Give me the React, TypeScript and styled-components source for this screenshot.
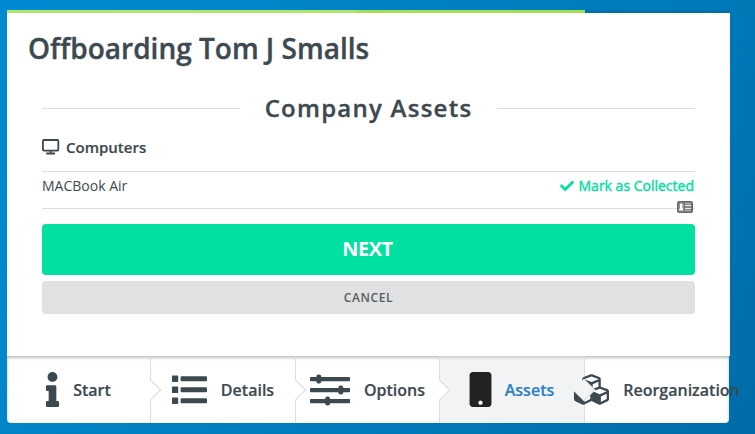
import React from "react";
import styled, { createGlobalStyle } from "styled-components";
import { FaCheck, FaCubes, FaInfo, FaMobile } from "react-icons/fa";

const ink = "#3d4950";
const rule = "#dcdddf";
const mint = "#00e0a0";

const GlobalStyle = createGlobalStyle`
  * { box-sizing: border-box; }
  html, body { margin: 0; height: 434px; overflow: hidden; }
  body { font-family: "Open Sans", "Noto Sans", sans-serif; color: ${ink}; }
`;

const Page = styled.main`
  height: 434px;
  padding: 10px 25px 0 7px;
  background: linear-gradient(125deg, #008ad1 0%, #0086ca 25%, #007abb 65%, #006ca7 100%);
`;

const Progress = styled.div`
  height: 3px;
  background: #0070ab;
`;

const ProgressFill = styled.div`
  width: 578px;
  height: 3px;
  background: linear-gradient(90deg, #b0e76b 0 349px, #a2df52 349px);
`;

const Panel = styled.section`
  height: 343px;
  padding: 17px 35px 0;
  background: #fff;
`;

const Title = styled.h1`
  margin: 0 0 0 -14px;
  font-size: 28px;
  font-weight: 600;
  line-height: 36px;
  white-space: nowrap;
  -webkit-text-stroke: 0.35px ${ink};
`;

const Divider = styled.h2`
  display: flex;
  align-items: center;
  gap: 25px;
  height: 36px;
  margin: 24px 0 0;
  font-size: 24px;
  font-weight: 600;
  line-height: 36px;
  letter-spacing: 1.25px;
  white-space: nowrap;
  -webkit-text-stroke: 0.35px ${ink};

  &::before,
  &::after {
    content: "";
    flex: 1;
    height: 1px;
    background: ${rule};
  }
`;

const GroupHeading = styled.h3`
  display: flex;
  align-items: center;
  gap: 6px;
  height: 46px;
  margin: 0;
  padding-bottom: 4px;
  border-bottom: 1px solid ${rule};
  font-size: 15px;
  font-weight: 600;
  -webkit-text-stroke: 0.2px ${ink};
`;

const AssetRow = styled.div`
  position: relative;
  display: flex;
  justify-content: space-between;
  height: 37px;
  padding-top: 4px;
  border-bottom: 1px solid ${rule};
  font-size: 14px;
  line-height: 20px;
`;

const Collect = styled.a`
  display: flex;
  align-items: center;
  gap: 5px;
  height: 20px;
  padding-right: 1px;
  color: ${mint};
  -webkit-text-stroke: 0.4px ${mint};
`;

const ContactBadge = styled.span`
  position: absolute;
  right: 2px;
  bottom: -5px;
  display: flex;
`;

const Button = styled.button<{ $primary?: boolean }>`
  display: block;
  width: 100%;
  height: ${(p) => (p.$primary ? 51 : 33)}px;
  margin-top: ${(p) => (p.$primary ? 15 : 6)}px;
  padding: ${(p) => (p.$primary ? "0 2px 2px 0" : "0")};
  border: 0;
  border-radius: 4px;
  background: ${(p) => (p.$primary ? mint : "#dfe1e2")};
  color: ${(p) => (p.$primary ? "#fff" : "#5b5c5d")};
  font-family: inherit;
  font-size: ${(p) => (p.$primary ? 20 : 12)}px;
  font-weight: ${(p) => (p.$primary ? 700 : 600)};
  letter-spacing: ${(p) => (p.$primary ? "-0.5px" : "0.6px")};
`;

const Steps = styled.nav`
  position: relative;
  display: grid;
  grid-template-columns: 144px 145px 144px 145px 144px;
  width: 722px;
  height: 67px;
  border-radius: 0 0 4px 4px;
  background: #fff;
  box-shadow: inset 0 2px 3px rgba(40, 50, 55, 0.3);
`;

const Step = styled.div<{ $active?: boolean; $tighten?: number }>`
  position: relative;
  display: flex;
  align-items: center;
  justify-content: center;
  gap: ${(p) => 14 - (p.$tighten ?? 0)}px;
  min-width: 0;
  padding-right: ${(p) => p.$tighten ?? 0}px;
  border-right: 1px solid #dcdddf;
  background: ${(p) => (p.$active ? "rgba(225, 228, 230, 0.45)" : "transparent")};
  color: ${(p) => (p.$active ? "#2f7fc8" : ink)};
  font-size: 16px;
  font-weight: 600;
  white-space: nowrap;
  -webkit-text-stroke: 0.2px;

  &:last-child { border-right: 0; }
  svg { flex-shrink: 0; -webkit-text-stroke: 0; }

  &:not(:last-child)::after {
    content: "";
    position: absolute;
    z-index: 2;
    top: 26px;
    right: -8px;
    width: 15px;
    height: 15px;
    border: solid #d8dadc;
    border-width: 0 1px 1px 0;
    background: ${(p) => (p.$active ? "#f3f4f5" : "#fff")};
    transform: rotate(-45deg);
  }
`;

const Monitor = () => (
  <svg width="18" height="16" viewBox="0 0 18 16" fill="none" stroke={ink}>
    <rect x="0.9" y="1" width="15.4" height="10.6" rx="1" strokeWidth="1.8" />
    <path d="M8.6 12v2M4.2 14.5h8.8" strokeWidth="1.8" />
  </svg>
);

const ContactCard = () => (
  <svg width="16" height="12" viewBox="0 0 16 12">
    <rect x="0.9" y="0.9" width="14.2" height="10.2" rx="1" fill="#eee" stroke="#666" strokeWidth="1.8" />
    <path d="M7.2 1v10M7 3.2h8M7 6h8M7 8.8h8" fill="none" stroke="#666" strokeWidth="1.3" />
    <path d="M2 2h4.5v8H2z" fill="#777" />
    <path d="M4.2 2.4a1.6 1.6 0 0 1 1 2.8L6.3 9.5H2L3.2 5.2a1.6 1.6 0 0 1 1-2.8z" fill="#fff" />
  </svg>
);

const ListIcon = () => (
  <svg width="35" height="30" viewBox="0 0 35 30" fill={ink}>
    {[0.5, 11.5, 22.5].map((y) => (
      <React.Fragment key={y}>
        <rect y={y} width="6.2" height="6.5" rx="0.8" />
        <rect x="8.6" y={y + 0.8} width="26.4" height="5" rx="1" />
      </React.Fragment>
    ))}
  </svg>
);

const Sliders = () => (
  <svg width="40" height="32" viewBox="0 0 40 32" fill={ink}>
    {[[3, 6.4], [14, 28.4], [25, 15.2]].map(([y, x]) => (
      <React.Fragment key={y}>
        <rect y={y} width="40" height="4.2" rx="0.8" />
        <rect x={x} y={y - 2.4} width="4.8" height="9" rx="2" />
      </React.Fragment>
    ))}
  </svg>
);

export default function App() {
  return (
    <>
      <GlobalStyle />
      <Page>
        <Progress><ProgressFill /></Progress>
        <Panel>
          <Title>Offboarding Tom J Smalls</Title>
          <Divider>Company Assets</Divider>
          <GroupHeading><Monitor />Computers</GroupHeading>
          <AssetRow>
            <span>MACBook Air</span>
            <Collect><FaCheck size={14} />Mark as Collected</Collect>
            <ContactBadge><ContactCard /></ContactBadge>
          </AssetRow>
          <Button $primary>NEXT</Button>
          <Button>CANCEL</Button>
        </Panel>
        <Steps>
          <Step $tighten={11}><FaInfo size={35} />Start</Step>
          <Step><ListIcon />Details</Step>
          <Step><Sliders />Options</Step>
          <Step $tighten={7} $active><FaMobile size={35} color="#222" />Assets</Step>
          <Step><FaCubes size={35} />Reorganization</Step>
        </Steps>
      </Page>
    </>
  );
}
